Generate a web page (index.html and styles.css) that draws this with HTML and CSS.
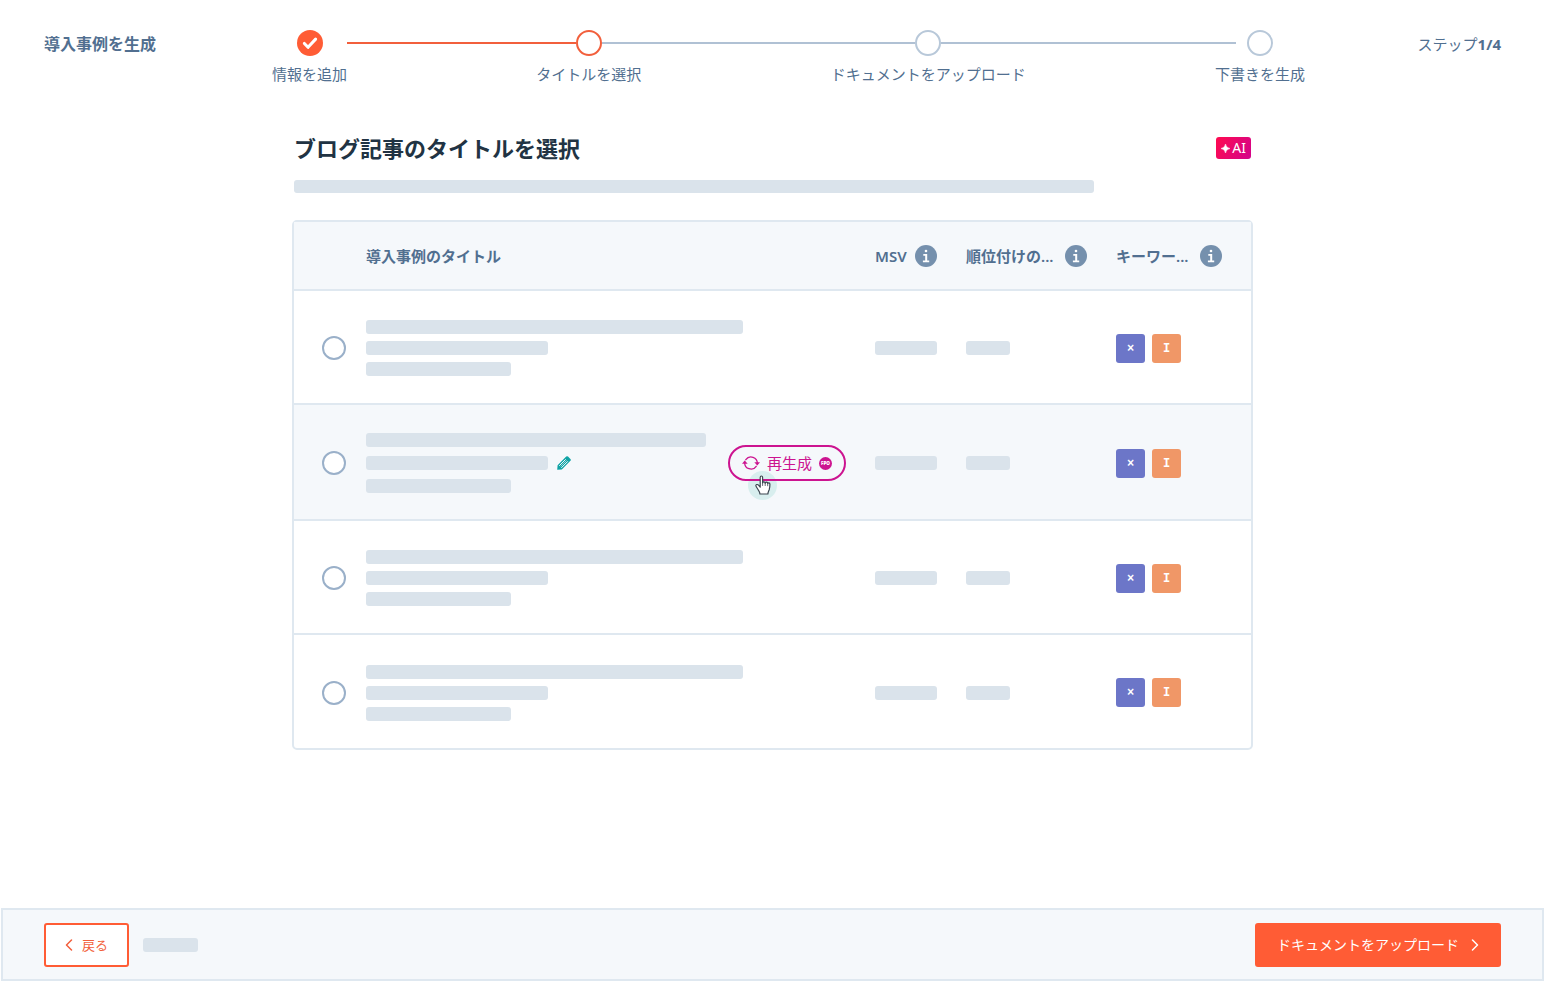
FILE: index.html
```html
<!DOCTYPE html>
<html lang="ja">
<head>
<meta charset="utf-8">
<meta name="viewport" content="width=device-width, initial-scale=1">
<title>導入事例を生成</title>
<link rel="stylesheet" href="styles.css">
</head>
<body>
<svg class="sprite" aria-hidden="true">
  <symbol id="info" viewBox="0 0 22 22">
    <circle cx="11" cy="11" r="11" fill="#7590ad"/>
    <circle cx="11" cy="6" r="1.3" fill="#fff"/>
    <path d="M8.300 9h3.900v6.600h2v1.700H7.900v-1.700h2.300v-4.900H8.300z" fill="#fff"/>
  </symbol>
</svg>

<header class="topbar">
  <p class="flow-name">導入事例を生成</p>
  <ol class="stepper">
    <li class="step done">
      <div class="node">
        <span class="track"><svg class="dot" viewBox="0 0 24 24" aria-hidden="true"><circle cx="12" cy="12" r="12" fill="#ff5c35"/><path d="M6.800 12.400l3.400 3.600 7-7.600" fill="none" stroke="#fff" stroke-width="2.800" stroke-linecap="round" stroke-linejoin="round"/></svg></span>
        <span class="label">情報を追加</span>
      </div>
    </li>
    <li class="step current" aria-current="step">
      <span class="line"></span>
      <div class="node">
        <span class="track"><span class="dot ring"></span></span>
        <span class="label">タイトルを選択</span>
      </div>
    </li>
    <li class="step">
      <span class="line"></span>
      <div class="node">
        <span class="track"><span class="dot ring"></span></span>
        <span class="label">ドキュメントをアップロード</span>
      </div>
    </li>
    <li class="step last">
      <span class="line"></span>
      <div class="node">
        <span class="track"><span class="dot ring"></span></span>
        <span class="label">下書きを生成</span>
      </div>
    </li>
  </ol>
  <p class="count">ステップ<b>1/4</b></p>
</header>

<main class="content">
  <div class="heading">
    <h1>ブログ記事のタイトルを選択</h1>
    <span class="ai-badge"><svg viewBox="0 0 10 10" aria-hidden="true"><path d="M5 0Q5.600 4.400 10 5Q5.600 5.600 5 10Q4.400 5.600 0 5Q4.400 4.400 5 0z" fill="#fff" stroke="#fff" stroke-width=".6"/></svg>AI</span>
  </div>
  <div class="bar intro"></div>

  <table class="titles">
    <thead>
      <tr>
        <th class="c-pick"></th>
        <th class="c-title" scope="col">導入事例のタイトル</th>
        <th class="c-msv" scope="col"><span class="head">MSV<svg class="info"><use href="#info"/></svg></span></th>
        <th class="c-rank" scope="col"><span class="head rank">順位付けの...<svg class="info"><use href="#info"/></svg></span></th>
        <th class="c-key" scope="col"><span class="head key">キーワー...<svg class="info"><use href="#info"/></svg></span></th>
      </tr>
    </thead>
    <tbody>
      <tr>
        <td><input class="pick" type="radio" name="title" aria-label="タイトル1"></td>
        <td><div class="lines"><span class="bar full"></span><span class="bar mid"></span><span class="bar short"></span></div></td>
        <td><span class="bar msv"></span></td>
        <td><span class="bar rank-value"></span></td>
        <td><div class="tags"><span class="tag violet">×</span><span class="tag orange">I</span></div></td>
      </tr>
      <tr class="active">
        <td><input class="pick" type="radio" name="title" aria-label="タイトル2"></td>
        <td>
          <div class="title-cell">
            <div class="lines">
              <span class="bar long"></span>
              <div class="editable">
                <span class="bar mid"></span>
                <button class="edit" type="button" aria-label="編集"><svg viewBox="0 0 14 14" aria-hidden="true"><path d="M.2 13.800L.6 9.200 9.200.6q.9-.9 1.800 0l2.400 2.400q.9.900 0 1.800L4.800 13.400z" fill="#0fa3a5"/><path d="M2.200 9.800l6.500-6.500M4.300 11.800l6.500-6.500" stroke="#f5f8fb" stroke-width="1"/><path d="M3.600 10.400l6-6" stroke="#f5f8fb" stroke-width=".6"/></svg></button>
              </div>
              <span class="bar short"></span>
            </div>
            <div class="regen-wrap">
              <span class="halo"></span>
              <button class="regen" type="button">
                <svg class="cycle" viewBox="0 0 18 16" aria-hidden="true"><g fill="none" stroke="#cc1490" stroke-width="1.300" stroke-linecap="round" stroke-linejoin="round"><path d="M3.800 4.700A6.300 6.300 0 0 1 15.300 8.600"/><path d="M14.200 11.300A6.300 6.300 0 0 1 2.700 7.400"/></g><path d="M12.300 7.300h5.700l-2.700 3.300zM0 8.700h5.700L2.700 5.400z" fill="#cc1490"/></svg>
                再生成
                <svg class="fpo" viewBox="0 0 14 14" aria-hidden="true"><circle cx="7" cy="7" r="7" fill="#cc1490"/><text x="7" y="9" text-anchor="middle">FPO</text></svg>
              </button>
              <svg class="hand" viewBox="0 0 16 20" aria-hidden="true"><path d="M5.200 12.200L3.500 10.100C2.700 9.100.5 9.400.9 10.900c.6 1.600 2.100 3.200 3 5.100.4.900.9 1.500 1 3h8c0-2 .7-2.600 1.300-4.200.5-1.500.7-3.600.7-5.600 0-1.700-1.900-1.700-2.200-.6 0-1.700-2.300-1.900-2.500-.4-.1-1.600-2.400-1.700-2.600-.4V2.400C7.600.5 5.200.5 5.200 2.400z" fill="#fff" stroke="#3c4650" stroke-width="1.200" stroke-linejoin="round"/><path d="M7.600 8v2.500M10.200 8.400v2.200M12.700 9v1.800" stroke="#3c4650" stroke-width=".8" stroke-linecap="round"/></svg>
            </div>
          </div>
        </td>
        <td><span class="bar msv"></span></td>
        <td><span class="bar rank-value"></span></td>
        <td><div class="tags"><span class="tag violet">×</span><span class="tag orange">I</span></div></td>
      </tr>
      <tr>
        <td><input class="pick" type="radio" name="title" aria-label="タイトル3"></td>
        <td><div class="lines"><span class="bar full"></span><span class="bar mid"></span><span class="bar short"></span></div></td>
        <td><span class="bar msv"></span></td>
        <td><span class="bar rank-value"></span></td>
        <td><div class="tags"><span class="tag violet">×</span><span class="tag orange">I</span></div></td>
      </tr>
      <tr>
        <td><input class="pick" type="radio" name="title" aria-label="タイトル4"></td>
        <td><div class="lines"><span class="bar full"></span><span class="bar mid"></span><span class="bar short"></span></div></td>
        <td><span class="bar msv"></span></td>
        <td><span class="bar rank-value"></span></td>
        <td><div class="tags"><span class="tag violet">×</span><span class="tag orange">I</span></div></td>
      </tr>
    </tbody>
  </table>
</main>

<footer class="actions">
  <button class="btn back" type="button"><svg class="chevron" viewBox="0 0 8 12" aria-hidden="true"><path d="M6.500 1L1.500 6l5 5" fill="none" stroke="currentColor" stroke-width="1.500" stroke-linecap="round" stroke-linejoin="round"/></svg>戻る</button>
  <span class="bar foot"></span>
  <button class="btn next" type="button">ドキュメントをアップロード<svg class="chevron" viewBox="0 0 8 12" aria-hidden="true"><path d="M1.500 1l5 5-5 5" fill="none" stroke="currentColor" stroke-width="1.500" stroke-linecap="round" stroke-linejoin="round"/></svg></button>
</footer>
</body>
</html>
```
FILE: styles.css
```css
* {
  box-sizing: border-box;
}

body {
  display: flex;
  flex-direction: column;
  min-height: 100vh;
  margin: 0;
  background: #fff;
  color: #516f90;
  font: 15px/20px "Noto Sans", "Noto Sans CJK JP", sans-serif;
}

button {
  font: inherit;
  cursor: pointer;
}

p, h1, ol {
  margin: 0;
  padding: 0;
}

.sprite {
  position: absolute;
  width: 0;
  height: 0;
}

/* Top bar */
.topbar {
  display: grid;
  grid-template-columns: 228px 1fr 196px;
  padding: 31px 44px 0;
}

.flow-name {
  font-size: 16px;
  font-weight: 700;
  line-height: 26px;
}

.count {
  line-height: 26px;
  text-align: right;
}

.stepper {
  display: flex;
  list-style: none;
}

.step {
  display: flex;
  flex: 1 1 auto;
  --line: #b0c1d4;
}

.step.done {
  flex: 0 0 auto;
}

.line {
  flex: 1;
  height: 2px;
  margin-top: 11px;
  background: var(--line);
}

.node {
  display: flex;
  flex-direction: column;
  gap: 9px;
}

.track {
  display: flex;
  align-items: center;
  justify-content: center;
  height: 24px;
}

.track::before,
.track::after {
  content: "";
  flex: 1;
  height: 2px;
  background: #b0c1d4;
}

.track::before {
  background: var(--line);
}

.done .track::before,
.done .track::after,
.last .track::after {
  background: none;
}

.last .track::before {
  margin-right: 11px;
}

.last .track::after {
  margin-left: 11px;
}

.dot {
  flex: none;
  width: 26px;
  height: 26px;
}

.ring {
  border: 2px solid #b8c8d9;
  border-radius: 50%;
}

.current {
  --line: #f25f3c;
}

.current .ring {
  border-color: #f25f3c;
}

.label {
  white-space: nowrap;
}

/* Main */
.content {
  flex: 1;
  width: 100%;
  max-width: 961px;
  margin: 0 auto;
  padding: 49px 0 32px;
}

.heading {
  display: flex;
  align-items: center;
  justify-content: space-between;
  padding: 0 2px;
}

h1 {
  color: #213343;
  font-size: 22px;
  font-weight: 700;
  line-height: 30px;
}

.ai-badge {
  display: flex;
  align-items: center;
  gap: 2px;
  height: 22px;
  padding: 0 5px;
  border-radius: 3px;
  background: linear-gradient(120deg, #ff0a4f, #d3048b);
  color: #fff;
  font-size: 14px;
}

.ai-badge svg {
  width: 9px;
  height: 9px;
}

.bar {
  display: block;
  height: 14px;
  border-radius: 3px;
  background: #dae3eb;
}

.intro {
  width: 800px;
  max-width: 100%;
  height: 13px;
  margin: 17px 2px 27px;
}

.titles {
  width: 100%;
  border: 2px solid #dfe8f0;
  border-radius: 5px;
  border-spacing: 0;
  table-layout: fixed;
}

th, td {
  padding: 0;
  border-bottom: 2px solid #dfe8f0;
  text-align: left;
}

th {
  height: 69px;
  background: #f5f8fb;
  font-weight: 600;
}

td {
  height: 114px;
  padding-top: 2px;
}

.active td {
  height: 116px;
  background: #f5f8fb;
}

tbody tr:last-child td {
  height: 113px;
  border-bottom: 0;
}

.c-pick { width: 72px; }
.c-msv { width: 91px; }
.c-rank { width: 150px; }
.c-key { width: 135px; }

.head {
  display: flex;
  align-items: center;
  justify-content: space-between;
  width: 62px;
}

.head.rank { width: 121px; }
.head.key { width: 106px; }

.info {
  flex: none;
  width: 22px;
  height: 22px;
}

.pick {
  display: block;
  width: 24px;
  height: 24px;
  margin: 0 0 0 28px;
  appearance: none;
  border: 2px solid #9ab0c9;
  border-radius: 50%;
  background: #fff;
}

.lines {
  display: flex;
  flex-direction: column;
  gap: 7px;
}

.active .lines {
  gap: 9px;
}

.full { width: 377px; }
.long { width: 340px; }
.mid { width: 182px; }
.short { width: 145px; }
.msv { width: 62px; }
.rank-value { width: 44px; }

.title-cell {
  display: flex;
  align-items: center;
  justify-content: space-between;
  padding-right: 29px;
}

.editable {
  display: flex;
  align-items: center;
  gap: 9px;
}

.edit {
  display: flex;
  padding: 0;
  border: 0;
  background: none;
}

.edit svg {
  width: 14px;
  height: 14px;
}

.regen-wrap {
  position: relative;
}

.regen {
  position: relative;
  display: flex;
  align-items: center;
  gap: 7px;
  height: 36px;
  padding: 0 12px;
  border: 2px solid #cc1490;
  border-radius: 18px;
  background: none;
  color: #cc1490;
  white-space: nowrap;
}

.cycle {
  width: 18px;
  height: 16px;
}

.fpo {
  width: 13px;
  height: 13px;
}

.fpo text {
  fill: #fff;
  font-size: 5px;
  font-weight: 900;
}

.halo {
  position: absolute;
  top: 26px;
  left: 20px;
  width: 29px;
  height: 29px;
  border-radius: 50%;
  background: #d8eeee;
}

.hand {
  position: absolute;
  top: 30px;
  left: 27px;
  width: 16px;
  height: 20px;
  pointer-events: none;
}

.tags {
  display: flex;
  gap: 7px;
}

.tag {
  width: 29px;
  height: 29px;
  border-radius: 3px;
  color: #fff;
  font: 700 12px/30px "Liberation Mono", monospace;
  text-align: center;
}

.violet { background: #6c76c8; }
.orange { background: #f09767; }

/* Footer */
.actions {
  display: flex;
  align-items: center;
  gap: 14px;
  height: 73px;
  margin: 0 1px;
  padding: 0 41px;
  border: 2px solid #dfe8f0;
  background: #f5f8fb;
}

.btn {
  display: flex;
  align-items: center;
  height: 44px;
  border: 2px solid #ff5c35;
  border-radius: 3px;
  white-space: nowrap;
}

.chevron {
  width: 8px;
  height: 12px;
}

.back {
  gap: 9px;
  padding: 0 19px;
  background: #fff;
  color: #f25f3c;
  font-size: 13px;
}

.next {
  gap: 12px;
  margin-left: auto;
  padding: 0 20px;
  background: #ff5c35;
  color: #fff;
  font-size: 14px;
}

.foot {
  width: 55px;
}
```
